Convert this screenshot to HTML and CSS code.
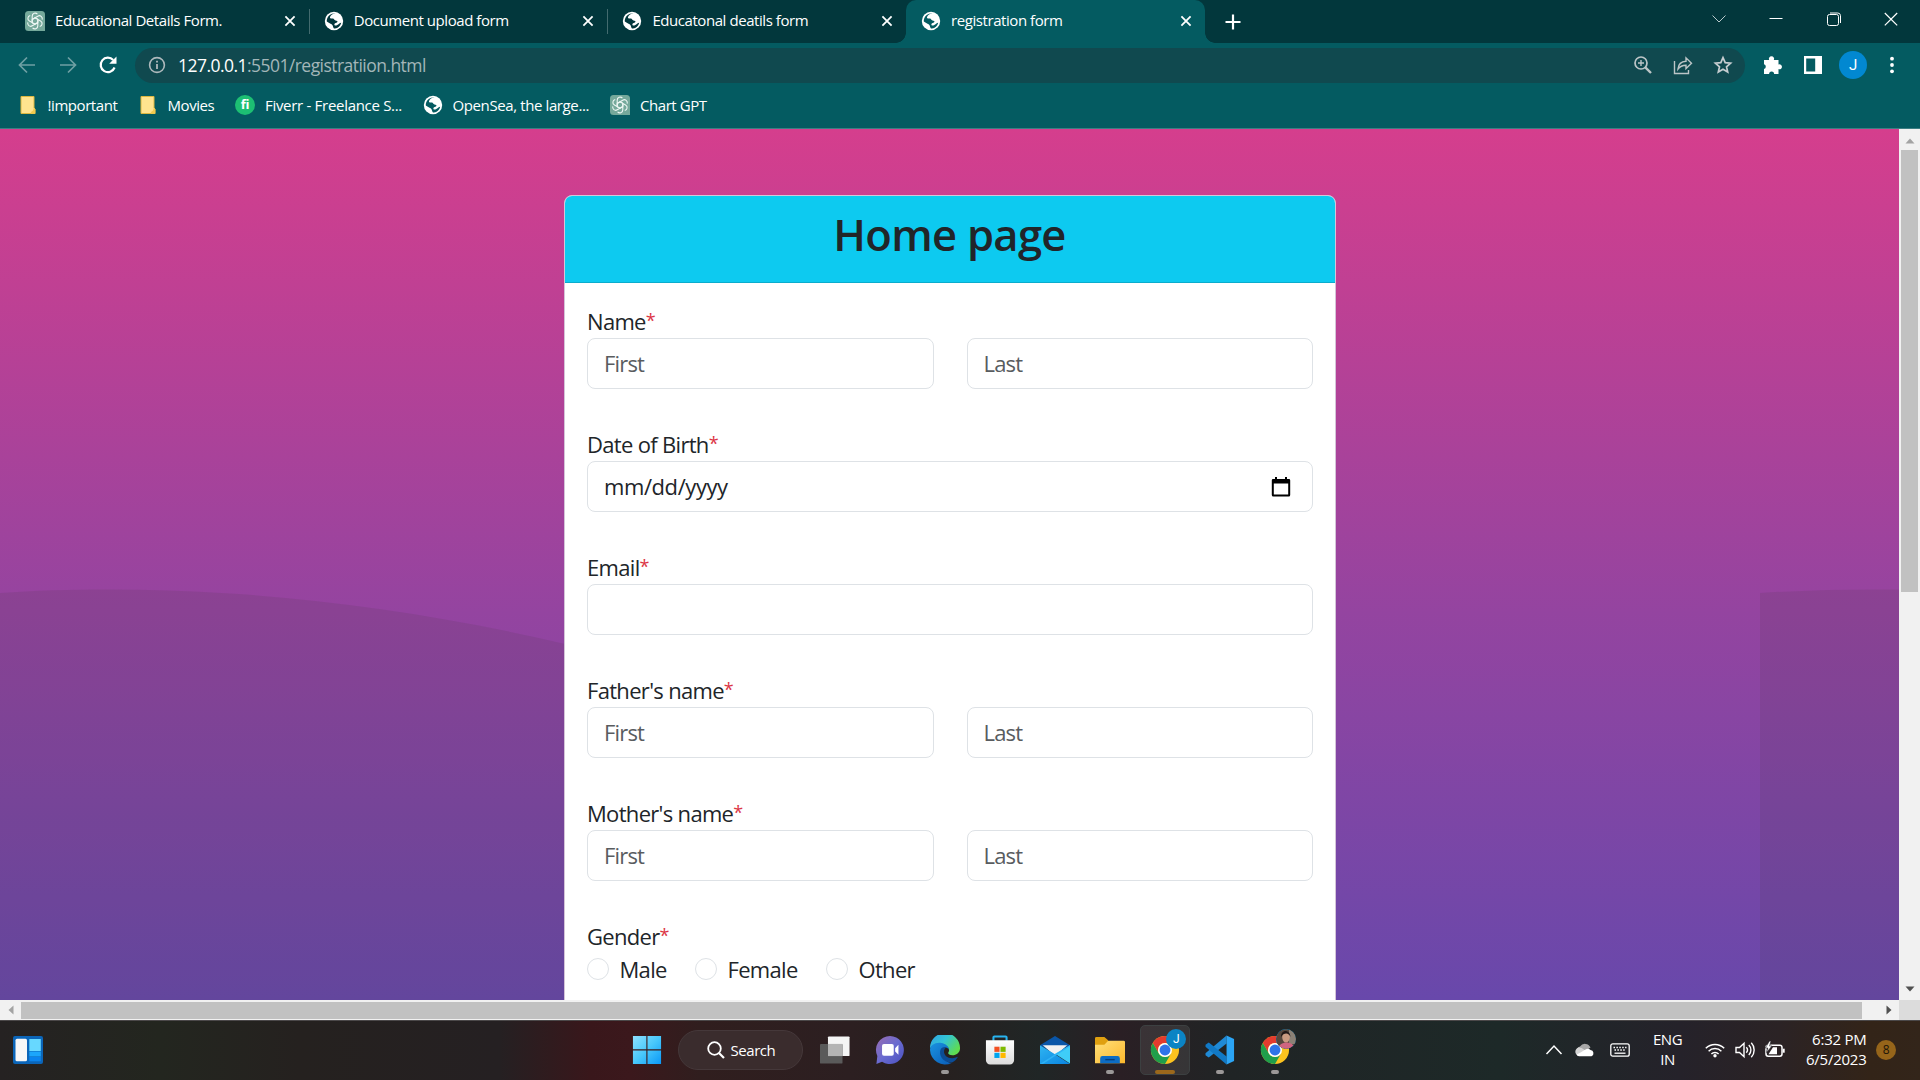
FILE: index.html
```html
<!DOCTYPE html>
<html lang="en">
<head>
<meta charset="utf-8">
<title>registration form</title>
<link rel="stylesheet" href="styles.css">
</head>
<body>
<svg class="defs" aria-hidden="true">
  <defs>
    <linearGradient id="gStart" x1="0" y1="0" x2="1" y2="1"><stop offset="0" stop-color="#8fe0ff"/><stop offset=".5" stop-color="#48c8fb"/><stop offset="1" stop-color="#0a98f8"/></linearGradient>
    <linearGradient id="gChat" x1="0" y1="0" x2="1" y2="1"><stop offset="0" stop-color="#9a6cb0"/><stop offset=".5" stop-color="#6a6bd0"/><stop offset="1" stop-color="#4a50c0"/></linearGradient>
    <linearGradient id="gEdgeTop" x1="0" y1="0" x2="1" y2="0.6"><stop offset="0" stop-color="#2f9fe6"/><stop offset=".5" stop-color="#33c4d4"/><stop offset="1" stop-color="#5fdc50"/></linearGradient>
    <linearGradient id="gEdgeLow" x1="0" y1="0" x2="1" y2="1"><stop offset="0" stop-color="#1a93e0"/><stop offset="1" stop-color="#0a5cb8"/></linearGradient>
    <linearGradient id="gStore" x1="0" y1="0" x2="0" y2="1"><stop offset="0" stop-color="#fff"/><stop offset="1" stop-color="#dcdcdc"/></linearGradient>
    <linearGradient id="gFolder" x1="0" y1="0" x2="1" y2="1"><stop offset="0" stop-color="#ffe07a"/><stop offset="1" stop-color="#fcb72c"/></linearGradient>
    <linearGradient id="gMail" x1="0" y1="0" x2="1" y2="1"><stop offset="0" stop-color="#2fb5f2"/><stop offset="1" stop-color="#0a84e0"/></linearGradient>
    <symbol id="globe" viewBox="0 0 20 20"><circle cx="10" cy="10" r="9.2" fill="#fff"/><path d="M11.500 2.300C8.500 2.800 6.200 4.600 6 6.200c-.2 1.600 1.500 1.300 2.800 1.300 1.500 0 1.300 1.800 2.700 2 1.300.2 2.200.3 1.900 1.600-.3 1.200-2.700.6-3 2.100-.3 1.300 1 1.700 2.500 1.100 2-.8 2.500-2.500 4.300-2.600-.7 3.200-3.200 5.600-6.200 5.900-1.500.1-1.800-1.600-2.200-2.900-.6-1.900-3.300-1.900-6-4.200C2.400 6 6.500 1.900 11.500 2.300z" fill="currentColor"/></symbol>
    <symbol id="gpt" viewBox="0 0 20 20"><path d="M3.500 0h13A3.500 3.500 0 0 1 20 3.500V20H3.500A3.500 3.500 0 0 1 0 16.500v-13A3.500 3.500 0 0 1 3.500 0z" fill="#75a99b"/><g fill="none" stroke="#eef7f4" stroke-width="1.100"><g id="petal"><path d="M10 6.700 7.200 8.400V5.200a3 3 0 0 1 5.200-2.100M7.200 8.400v3.300"/></g><use href="#petal" transform="rotate(60 10 10)"/><use href="#petal" transform="rotate(120 10 10)"/><use href="#petal" transform="rotate(180 10 10)"/><use href="#petal" transform="rotate(240 10 10)"/><use href="#petal" transform="rotate(300 10 10)"/></g></symbol>
    <symbol id="close" viewBox="0 0 12 12"><path d="M1.400 1.400l9.200 9.200M10.600 1.400L1.400 10.600" stroke="#fff" stroke-width="1.800"/></symbol>
    <symbol id="folder" viewBox="0 0 16 20"><path d="M1 1.500h13V13l1 1v4.500H1z" fill="#ffe48f" stroke="#dcb840" stroke-width="1"/><path d="M14 12.700 15.300 14v4.700h-4.500c-.3-1.500.7-2.500 2-3z" fill="#f2cb50"/></symbol>
    <symbol id="chrome" viewBox="0 0 32 32"><circle cx="16" cy="16" r="15" fill="#fcc31f"/><path d="M3 8.500A15 15 0 0 1 29 8.500H16a7.500 7.500 0 0 0-6.500 11.200z" fill="#e33b2e"/><path d="M3 8.500 9.500 19.700A7.500 7.500 0 0 0 22.500 19.700L16 31A15 15 0 0 1 3 8.500z" fill="#1f9e4b"/><circle cx="16" cy="16" r="7.500" fill="#fff"/><circle cx="16" cy="16" r="5.800" fill="#2f74e8"/></symbol>
  </defs>
</svg>

<header class="browser">
  <div class="tabstrip">
    <div class="tab"><svg class="fav"><use href="#gpt"/></svg><span class="title">Educational Details Form.</span><svg class="x"><use href="#close"/></svg></div>
    <div class="tab"><svg class="fav"><use href="#globe"/></svg><span class="title">Document upload form</span><svg class="x"><use href="#close"/></svg></div>
    <div class="tab"><svg class="fav"><use href="#globe"/></svg><span class="title">Educatonal deatils form</span><svg class="x"><use href="#close"/></svg></div>
    <div class="tab active"><svg class="fav"><use href="#globe"/></svg><span class="title">registration form</span><svg class="x"><use href="#close"/></svg></div>
    <svg class="newtab" viewBox="0 0 16 16"><path d="M8 .5v15M.5 8h15" stroke="#fff" stroke-width="2.200"/></svg>
    <div class="winctl">
      <svg viewBox="0 0 16 16"><path d="M1.500 4.500 8 11l6.500-6.500" stroke="#b9cacc" fill="none"/></svg>
      <svg viewBox="0 0 16 16"><path d="M1.500 7.500h13" stroke="#fff"/></svg>
      <svg viewBox="0 0 16 16"><path d="M1.500 5.500a2 2 0 0 1 2-2h7a2 2 0 0 1 2 2v7a2 2 0 0 1-2 2h-7a2 2 0 0 1-2-2zM4 2h7.500A2.800 2.800 0 0 1 14.500 4.500v7.500" stroke="#fff" fill="none"/></svg>
      <svg viewBox="0 0 16 16"><path d="M1.800 2l12.400 12.400M14.200 2 1.800 14.400" stroke="#fff" stroke-width="1.200"/></svg>
    </div>
  </div>
  <div class="toolbar">
    <div class="nav">
      <svg viewBox="0 0 20 20"><path d="M18 10H3M10 2.500 2.500 10l7.500 7.500" stroke="#6fa0a4" fill="none" stroke-width="1.700"/></svg>
      <svg viewBox="0 0 20 20"><path d="M2 10h15M10 2.500l7.500 7.500-7.500 7.500" stroke="#6fa0a4" fill="none" stroke-width="1.700"/></svg>
      <svg viewBox="0 0 20 20"><path d="M16.600 12.500A7.200 7.200 0 1 1 15.200 5" stroke="#fff" fill="none" stroke-width="2.200"/><path d="M18.500 1.500v7.300h-7.300z" fill="#fff"/></svg>
    </div>
    <div class="omnibox">
      <svg class="info" viewBox="0 0 18 18"><circle cx="9" cy="9" r="7.400" fill="none" stroke="#aeb9bc" stroke-width="1.600"/><path d="M9 8v5M9 4.700v1.900" stroke="#aeb9bc" stroke-width="1.800"/></svg>
      <span class="url">127.0.0.1<span>:5501/registratiion.html</span></span>
      <div class="actions">
        <svg viewBox="0 0 20 20"><circle cx="8" cy="8" r="6" fill="none" stroke="#bcc5c7" stroke-width="1.700"/><path d="M12.300 12.300l5.700 5.700" stroke="#bcc5c7" stroke-width="2.400"/><path d="M8 5v6M5 8h6" stroke="#bcc5c7" stroke-width="1.400"/></svg>
        <svg viewBox="0 0 20 20"><path d="M1.500 6v12.500h14V15M5 14c.4-5 3-7.500 8-7.700V2.800l5.500 5.400-5.500 5.300v-3.300c-3.500 0-6 1-8 3.800z" fill="none" stroke="#bcc5c7" stroke-width="1.400"/></svg>
        <svg viewBox="0 0 20 20"><path d="M10 2.700l2.200 5 5.400.5-4.100 3.600 1.200 5.300L10 14.300l-4.700 2.800 1.200-5.300-4.100-3.600 5.400-.5z" fill="none" stroke="#c6cdd0" stroke-width="1.700"/></svg>
      </div>
    </div>
    <div class="ext">
      <svg viewBox="0 0 20 20"><path d="M1 5h5.200a2.600 2.600 0 1 1 4.600 0H15.500v4.500a2.500 2.500 0 1 1 0 4.600V19h-4.400a2.500 2.500 0 0 0-5 0H1v-4.900a2.500 2.500 0 0 0 0-4.800z" fill="#fff"/></svg>
      <svg viewBox="0 0 20 20"><path d="M1 1h18v18H1zM3.200 3.400v13.200h9V3.400z" fill="#fff" fill-rule="evenodd"/></svg>
      <span class="avatar">J</span>
      <svg viewBox="0 0 20 20"><g fill="#fff"><circle cx="10" cy="3.700" r="1.900"/><circle cx="10" cy="10" r="1.900"/><circle cx="10" cy="16.300" r="1.900"/></g></svg>
    </div>
  </div>
  <nav class="bookmarks">
    <a class="bm"><svg class="fold"><use href="#folder"/></svg>!important</a>
    <a class="bm"><svg class="fold"><use href="#folder"/></svg>Movies</a>
    <a class="bm"><span class="fiverr">fi</span>Fiverr - Freelance S...</a>
    <a class="bm"><svg class="fav"><use href="#globe"/></svg>OpenSea, the large...</a>
    <a class="bm"><svg class="fav"><use href="#gpt"/></svg>Chart GPT</a>
  </nav>
</header>

<div class="viewport">
  <main class="page">
    <svg class="wave" viewBox="0 0 1899 871"><path d="M0 464C70 459.300 150 459.300 230 464.500C340 471.500 450 488 565 515L900 600V871H0zM1760 464C1806 461 1852 460 1899 460.500V871H1760z" fill="#413c3c" fill-opacity=".12"/></svg>
    <form class="card">
      <h1>Home page</h1>
      <div class="body">
        <div class="field"><label>Name<b>*</b></label><div class="row"><input placeholder="First"><input placeholder="Last"></div></div>
        <div class="field"><label>Date of Birth<b>*</b></label><div class="date"><span>mm/dd/yyyy</span><svg viewBox="0 0 20 22"><path d="M2 3h2V1h2v2h8V1h2v2h2a1.200 1.200 0 0 1 1.200 1.200V19a1.500 1.500 0 0 1-1.500 1.500H2.300A1.500 1.500 0 0 1 .8 19V4.200A1.200 1.200 0 0 1 2 3zM2.800 7.500v11h14.400v-11z" fill="#000" fill-rule="evenodd"/></svg></div></div>
        <div class="field"><label>Email<b>*</b></label><div class="row"><input></div></div>
        <div class="field"><label>Father's name<b>*</b></label><div class="row"><input placeholder="First"><input placeholder="Last"></div></div>
        <div class="field"><label>Mother's name<b>*</b></label><div class="row"><input placeholder="First"><input placeholder="Last"></div></div>
        <div class="field"><label>Gender<b>*</b></label><div class="radios"><label><i></i>Male</label><label><i></i>Female</label><label><i></i>Other</label></div></div>
      </div>
    </form>
  </main>
  <div class="vscroll"><svg viewBox="0 0 10 6"><path d="M5 .5 9.500 5.500h-9z" fill="#a3a3a3"/></svg><div class="vthumb"></div><svg viewBox="0 0 10 6"><path d="M5 5.500 9.500.5h-9z" fill="#505050"/></svg></div>
  <div class="hscroll"><svg viewBox="0 0 6 10"><path d="M.5 5 5.500.5v9z" fill="#a3a3a3"/></svg><div class="hthumb"></div><svg viewBox="0 0 6 10"><path d="M5.500 5 .5.5v9z" fill="#505050"/></svg></div>
  <div class="corner"></div>
</div>

<footer class="taskbar">
  <svg class="widgets" viewBox="0 0 30 28"><rect width="30" height="28" rx="2" fill="#0b65b8"/><rect x="2.500" y="2.800" width="11.500" height="22.500" rx="1.500" fill="#f7f7f7"/><path d="M16.300 3h11.500v12H16.300z" fill="#67d8ff"/><path d="M16.300 15.500h11.500v5H16.300z" fill="#1ba6fb"/><path d="M16.300 21h11.500v4.300H16.300z" fill="#0a84ee"/></svg>
  <div class="apps">
    <div class="app"><svg viewBox="0 0 32 32"><path d="M1 1h14.300v14.300H1zM16.500 1H31v14.300H16.500zM1 16.500h14.300V31H1zM16.500 16.500H31V31H16.500z" fill="url(#gStart)"/></svg></div>
    <div class="search"><svg viewBox="0 0 18 18"><circle cx="7.500" cy="7.500" r="6.300" fill="none" stroke="#fff" stroke-width="1.800"/><path d="M12 12l5 5" stroke="#fff" stroke-width="2.200"/></svg>Search</div>
    <div class="app"><svg viewBox="0 0 32 32"><rect x="8.500" y="1.500" width="23" height="21" rx="1" fill="#f5f5f5"/><rect x="0" y="9.500" width="24" height="21" rx="1" fill="#5a5a5a"/><path d="M8.500 9.500H24v13H8.500z" fill="#b4b4b4"/></svg></div>
    <div class="app"><svg viewBox="0 0 32 32"><path d="M16 1a15 15 0 1 1-8.500 27.500L1.500 31l1-8.500A15 15 0 0 1 16 1z" fill="url(#gChat)"/><rect x="7.500" y="9.500" width="12.500" height="12.500" rx="2" fill="#fff"/><path d="M21.500 14l3.500-3.500v10.500L21.500 17.500z" fill="#fff"/></svg></div>
    <div class="app run"><svg viewBox="0 0 32 32"><path d="M0 14.500A16 16 0 0 1 32 13.500c.3 5-3.600 8-8 8-4 0-5.300-1.700-4.300-3.200 2-3-.7-7.500-6.500-8C7 9.500 1.500 11 0 14.500z" fill="url(#gEdgeTop)"/><path d="M0 16c0-5 5.500-8.500 12-7.500 5.500.8 8.500 4.500 8 7.300-.3-1.700-2-2.800-4-2.500-3.500.5-5 5.500-2 10.500 2 3.500 5.500 6 9 6A16 16 0 0 1 0 16z" fill="url(#gEdgeLow)"/><path d="M11.500 15c-3 6.500 2.500 15 12 14.300 2.500-1 5-3.300 6.300-6-8 3.700-15.500-.3-14.800-6.300.2-1.800 1.200-3.300 2.500-3.500-2.500-.8-4.800-.5-6 1.500z" fill="#0b4c96"/></svg></div>
    <div class="app"><svg viewBox="0 0 32 32"><path d="M9 6V2.500a1 1 0 0 1 1-1h12a1 1 0 0 1 1 1V6" fill="none" stroke="#28b4f0" stroke-width="2.200"/><path d="M1 5.500h30V27a4.500 4.500 0 0 1-4.500 4.500h-21A4.500 4.500 0 0 1 1 27z" fill="url(#gStore)"/><path d="M10 12.500h5.500V18H10z" fill="#f25022"/><path d="M16.500 12.500H22V18h-5.500z" fill="#7fba00"/><path d="M10 19h5.500v5.500H10z" fill="#00a4ef"/><path d="M16.500 19H22v5.500h-5.500z" fill="#ffb900"/></svg></div>
    <div class="app"><svg viewBox="0 0 32 32"><path d="M0 11 16 1l16 10-16 9z" fill="#0a56a8"/><path d="M3 11h26L16 22z" fill="#f1f1f1"/><path d="M0 11l16 9.500L32 31H0z" fill="url(#gMail)"/><path d="M32 11 16 20 32 30.500z" fill="#3fcdf8"/><path d="M0 31 16 20.500 32 11 32 12 3 31z" fill="#2db2f5"/></svg></div>
    <div class="app run"><svg viewBox="0 0 32 32"><path d="M0 3.500A1.500 1.500 0 0 1 1.500 2H10l4 3.500V12H0z" fill="#e0a010"/><path d="M0 10.500h10L14 6h16.500A1.500 1.500 0 0 1 32 7.500V30H0z" fill="url(#gFolder)"/><path d="M5.500 30v-5a2.500 2.500 0 0 1 2.500-2.500h16a2.500 2.500 0 0 1 2.500 2.500v5z" fill="#0d6cc4"/><path d="M11 26.300h10" stroke="#063e7c" stroke-width="1.500"/></svg></div>
    <div class="app current"><svg><use href="#chrome"/></svg><span class="badge">J</span></div>
    <div class="app run"><svg viewBox="0 0 32 32"><path d="M23 .5V9L4 24 .5 21.500v-2z" fill="#1f8ad6"/><path d="M23 31.500V23L4 8 .5 10.500v2z" fill="#1179c6"/><path d="M23 .5 31 4.200V27.800L23 31.500z" fill="#2ba5f5"/></svg></div>
    <div class="app run"><svg><use href="#chrome"/></svg><svg class="badge" viewBox="0 0 20 20"><clipPath id="round"><circle cx="10" cy="10" r="10"/></clipPath><g clip-path="url(#round)"><path d="M0 0h20v20H0z" fill="#55473d"/><path d="M13 0h7v15h-7z" fill="#8b8176"/><ellipse cx="10" cy="8" rx="3.800" ry="5.500" fill="#c99a80"/><path d="M5 8C5 0 14 0 14.500 8 13 3.500 8 3 5 8z" fill="#211816"/><path d="M2 20c1-8 15-9 17 0z" fill="#cf6480"/></g></svg></div>
  </div>
  <div class="tray">
    <svg class="chev" viewBox="0 0 18 18"><path d="M1.500 13 9 5l7.500 8" fill="none" stroke="#fff" stroke-width="1.500"/></svg>
    <svg class="cloud" viewBox="0 0 20 14"><path d="M2 9A4 4 0 0 1 5 3.500 6 6 0 0 1 15.500 4.500L9 9z" fill="#a7a7a7"/><path d="M5 13a4.300 4.300 0 0 1-4-6.500A4 4 0 0 1 6.500 5L18 12z" fill="#d4d4d4"/><path d="M1.500 11.500C4 10.500 8 8 10.500 6.500a4 4 0 0 1 5 .5 3.300 3.300 0 0 1 1 6.300H4a3.500 3.500 0 0 1-2.500-1.800z" fill="#fff"/></svg>
    <svg class="kbd" viewBox="0 0 20 14"><rect x=".8" y=".8" width="18.400" height="12.400" rx="2" fill="none" stroke="#fff" stroke-width="1.300"/><path d="M3.500 4.500h13M4.500 7h11" stroke="#fff" stroke-width="1.400" stroke-dasharray="1.500 1.400"/><path d="M4.500 10.200h11" stroke="#fff" stroke-width="1.300"/></svg>
    <span class="lang">ENG<br>IN</span>
    <svg class="wifi" viewBox="0 0 20 16"><g fill="none" stroke="#fff" stroke-width="1.500"><path d="M.8 6.300a13 13 0 0 1 18.400 0M3.600 9.200a9 9 0 0 1 12.800 0M6.400 12a5 5 0 0 1 7.200 0"/></g><circle cx="10" cy="13.800" r="1.700" fill="#fff"/></svg>
    <svg class="snd" viewBox="0 0 20 18"><g fill="none" stroke="#fff" stroke-width="1.400"><path d="M1 6.500h3.500L9 2.300v13.400L4.500 11.500H1z"/><path d="M11.300 6.300a4 4 0 0 1 0 5.400M13.800 4a7 7 0 0 1 0 10M16.300 1.800a10.500 10.500 0 0 1 0 14.400"/></g></svg>
    <svg class="bat" viewBox="0 0 20 18"><rect x="1" y="4.200" width="16" height="11" rx="2.200" fill="none" stroke="#fff" stroke-width="1.500"/><path d="M18.700 7.700v4" stroke="#fff" stroke-width="2"/><path d="M3.500 13.300 8 6.300h4v7z" fill="#fff"/><path d="M4.500 0 .3 7h2.500L1.500 11.500 7 5H4.500L6 0z" fill="#fff" stroke="#25232a" stroke-width=".6"/></svg>
    <span class="clock">6:32 PM<br>6/5/2023</span>
    <span class="count">8</span>
  </div>
</footer>
</body>
</html>
```
FILE: styles.css
```css
* { box-sizing: border-box; }
body {
  margin: 0;
  width: 1920px;
  height: 1080px;
  overflow: hidden;
  display: grid;
  grid-template-rows: 129px 891px 60px;
  font-family: "Open Sans", "Noto Sans", sans-serif;
  font-size: 15px;
  letter-spacing: -0.029em;
  color: #fff;
}
svg { display: block; flex: none; }
.defs { position: absolute; width: 0; height: 0; }

/* browser chrome */
.browser {
  display: grid;
  grid-template-rows: 43px 44px 1fr;
  background: #045b61;
  border-bottom: 1px solid #3c7f84;
}
.tabstrip {
  display: flex;
  align-items: center;
  background: #02373c;
  padding-left: 10px;
}
.tab {
  position: relative;
  width: 298.700px;
  height: 43px;
  display: flex;
  align-items: center;
  padding: 0 13px 1px 15px;
  color: #02373c;
}
.tab::after {
  content: "";
  position: absolute;
  right: -1px;
  top: 9px;
  width: 1px;
  height: 25px;
  background: #436b6f;
}
.tab:nth-child(3)::after, .tab.active::after { display: none; }
.tab.active {
  background: #045b61;
  color: #045b61;
  border-radius: 10px 10px 0 0;
}
.tab.active::before {
  content: "";
  position: absolute;
  left: -10px;
  right: -10px;
  bottom: 0;
  height: 10px;
  background:
    radial-gradient(circle at 0 0, transparent 9.500px, #045b61 10px) 0 0 / 10px 10px no-repeat,
    radial-gradient(circle at 100% 0, transparent 9.500px, #045b61 10px) 100% 0 / 10px 10px no-repeat;
}
.fav { width: 20px; height: 20px; margin-right: 10px; }
.title { flex: 1; color: #fff; padding-bottom: 2px; }
.x { width: 12px; height: 12px; }
.newtab { width: 16px; height: 16px; margin-left: 20.500px; }
.winctl { display: flex; gap: 41.300px; margin-left: auto; padding: 0 21px 5px 0; }
.winctl svg { width: 16px; height: 16px; }

.toolbar { display: flex; align-items: center; padding-left: 17px; }
.nav { display: flex; gap: 20.500px; }
.nav svg { width: 20px; height: 20px; }
.omnibox {
  width: 1610px;
  height: 35px;
  margin-left: 17px;
  padding: 0 12px 0 13px;
  display: flex;
  align-items: center;
  background: #10494f;
  border-radius: 18px;
}
.info { width: 18px; height: 18px; }
.url { margin-left: 12px; font-size: 17.500px; letter-spacing: -0.031em; }
.url span { color: #a3b6b9; }
.actions { display: flex; gap: 20px; margin-left: auto; }
.actions svg { width: 20px; height: 20px; }
.ext { display: flex; align-items: center; gap: 20px; margin-left: 18px; }
.ext svg { width: 20px; height: 20px; }
.avatar {
  width: 28px;
  height: 28px;
  margin: 0 -5px 0 -4px;
  border-radius: 50%;
  background: #0288d1;
  font: 15px/28px Roboto, sans-serif;
  text-align: center;
}
.bookmarks { display: flex; padding: 0 0 5px 20px; }
.bm { display: flex; align-items: center; white-space: nowrap; color: #fff; }
.bm .fav, .bm .fiverr { margin-right: 10px; }
.bm:nth-child(1) { width: 120px; }
.bm:nth-child(2) { width: 95px; }
.bm:nth-child(3) { width: 188px; letter-spacing: -0.020em; }
.bm:nth-child(4) { width: 187px; letter-spacing: -0.026em; }
.bm:nth-child(4) .fav { color: #045b61; margin-right: 9.500px; }
.fold { width: 16px; height: 20px; margin-right: 11.500px; }
.fiverr {
  width: 20px;
  height: 20px;
  border-radius: 50%;
  background: #1dbf73;
  font-weight: 700;
  font-size: 13px;
  line-height: 19px;
  text-align: center;
}

/* web page */
.viewport {
  display: grid;
  grid-template: 871px 20px / 1899px 21px;
  background: #f1f1f1;
}
.page {
  position: relative;
  overflow: hidden;
  background: linear-gradient(#d53e8d 0, #9444a0 483px, #6848ab 871px);
  padding-top: 66px;
}
.wave { position: absolute; inset: 0; width: 1899px; height: 871px; }
.card {
  position: relative;
  width: 772px;
  height: 1300px;
  margin: 0 auto 0 564px;
  background: #fff;
  border: 1px solid #d4c4d8;
  border-radius: 8px;
  color: #212529;
  font-size: 22px;
  letter-spacing: -0.031em;
  overflow: hidden;
}
h1 {
  margin: 0;
  height: 87px;
  padding: 9px 1px 0 0;
  background: #0dcaf0;
  border-bottom: 1px solid #0baccc;
  font-size: 43.500px;
  line-height: 60px;
  font-weight: 560;
  letter-spacing: -0.016em;
  text-align: center;
}
.body { padding: 22px 22px; }
.field { margin-bottom: 39px; }
.field label { display: block; line-height: 33px; }
.field b { color: #dc3545; font-weight: 400; font-size: 18px; line-height: 1; vertical-align: 3px; }
.row { display: flex; gap: 33px; }
.row input, .date {
  flex: 1;
  min-width: 0;
  height: 51px;
  padding: 0 16px 2px;
  border: 1px solid #dee2e6;
  border-radius: 8px;
  background: #fff;
  font: inherit;
  letter-spacing: -0.038em;
  color: inherit;
}
.row input::placeholder { color: #595c5f; opacity: 1; }
.date { display: flex; align-items: center; justify-content: space-between; padding-right: 21px; letter-spacing: -0.019em; }
.date svg { width: 20px; height: 22px; margin-top: 2px; }
.radios { display: flex; }
.radios label { display: flex; align-items: center; }
.radios label:nth-child(1) { width: 108px; }
.radios label:nth-child(2) { width: 131px; }
.radios i { width: 22px; height: 22px; margin: -1px 10.500px 0 0; border: 1px solid #dee2e6; border-radius: 50%; }

.vscroll { display: flex; flex-direction: column; align-items: center; padding: 9px 0 8px; }
.vscroll svg { width: 10px; height: 6px; }
.vthumb { width: 17px; height: 442px; margin: 6px 0 auto; background: #c1c1c1; }
.hscroll { display: flex; align-items: center; padding: 0 7px 0 8px; }
.hscroll svg { width: 6px; height: 10px; }
.hthumb { width: 1841px; height: 17px; margin: 0 auto 0 7px; background: #c1c1c1; }
.corner { background: #dcdcdc; }

/* taskbar */
.taskbar {
  display: flex;
  align-items: center;
  padding-bottom: 1px;
  border-top: 1px solid #4b4849;
  background: linear-gradient(90deg, #252222 0, #23261f 160px, #25211f 300px, #252022 500px, #39171b 590px, #3b181c 630px, #301e1e 700px, #2c1f21 850px, #27201f 940px, #202626 1040px, #2a1f24 1120px, #202425 1230px, #1d2928 1500px, #25222a 1680px, #2b2325 1780px, #332418 1870px, #33251a);
}
.widgets { width: 30px; height: 28px; margin-left: 13px; }
.apps { display: flex; align-items: center; margin-left: 576px; }
.app {
  position: relative;
  width: 55px;
  height: 50px;
  display: grid;
  place-items: center;
}
.app > svg { width: 30px; height: 30px; }
.app.run::after, .app.current::after {
  content: "";
  position: absolute;
  left: 23.500px;
  bottom: 1px;
  width: 8px;
  height: 4px;
  border-radius: 2px;
  background: #9b9898;
}
.app.current::before {
  content: "";
  position: absolute;
  inset: 0 2.500px;
  border: 1px solid #3c4041;
  border-radius: 5px;
  background: #ffffff16;
}
.app.current::after { left: 17.500px; width: 20px; background: #9b681c; }
.app > svg { position: relative; }
.app .badge {
  position: absolute;
  left: 28.500px;
  top: 4px;
  width: 20px;
  height: 20px;
  border-radius: 50%;
  background: #0b84c4;
  font: 12px/20px Roboto, sans-serif;
  text-align: center;
}
.search {
  width: 125px;
  height: 40px;
  margin: 0 5px 0 3.500px;
  padding: 0 0 1px 28px;
  display: flex;
  align-items: center;
  border: 1px solid #45383a;
  border-radius: 20px;
  background: #3a2c2d;
}
.search svg { width: 18px; height: 18px; margin-right: 6px; }
.tray { flex: 1; display: flex; align-items: center; margin-left: 242px; white-space: nowrap; line-height: 20px; }
.chev { width: 18px; height: 18px; }
.cloud { width: 20px; height: 14px; margin-left: 12px; }
.kbd { width: 20px; height: 14px; margin-left: 15px; }
.lang { width: 46px; margin-left: 15px; padding-bottom: 2px; text-align: center; }
.wifi { width: 20px; height: 16px; margin-left: 14px; }
.snd { width: 20px; height: 18px; margin-left: 10px; }
.bat { width: 20px; height: 18px; margin-left: 10px; }
.clock { width: 82px; padding-bottom: 3px; text-align: right; letter-spacing: -0.016em; }
.count {
  width: 20px;
  height: 20px;
  margin-left: 9.500px;
  border-radius: 50%;
  background: #96651a;
  color: #1b1408;
  font-size: 12px;
  text-align: center;
}
```
